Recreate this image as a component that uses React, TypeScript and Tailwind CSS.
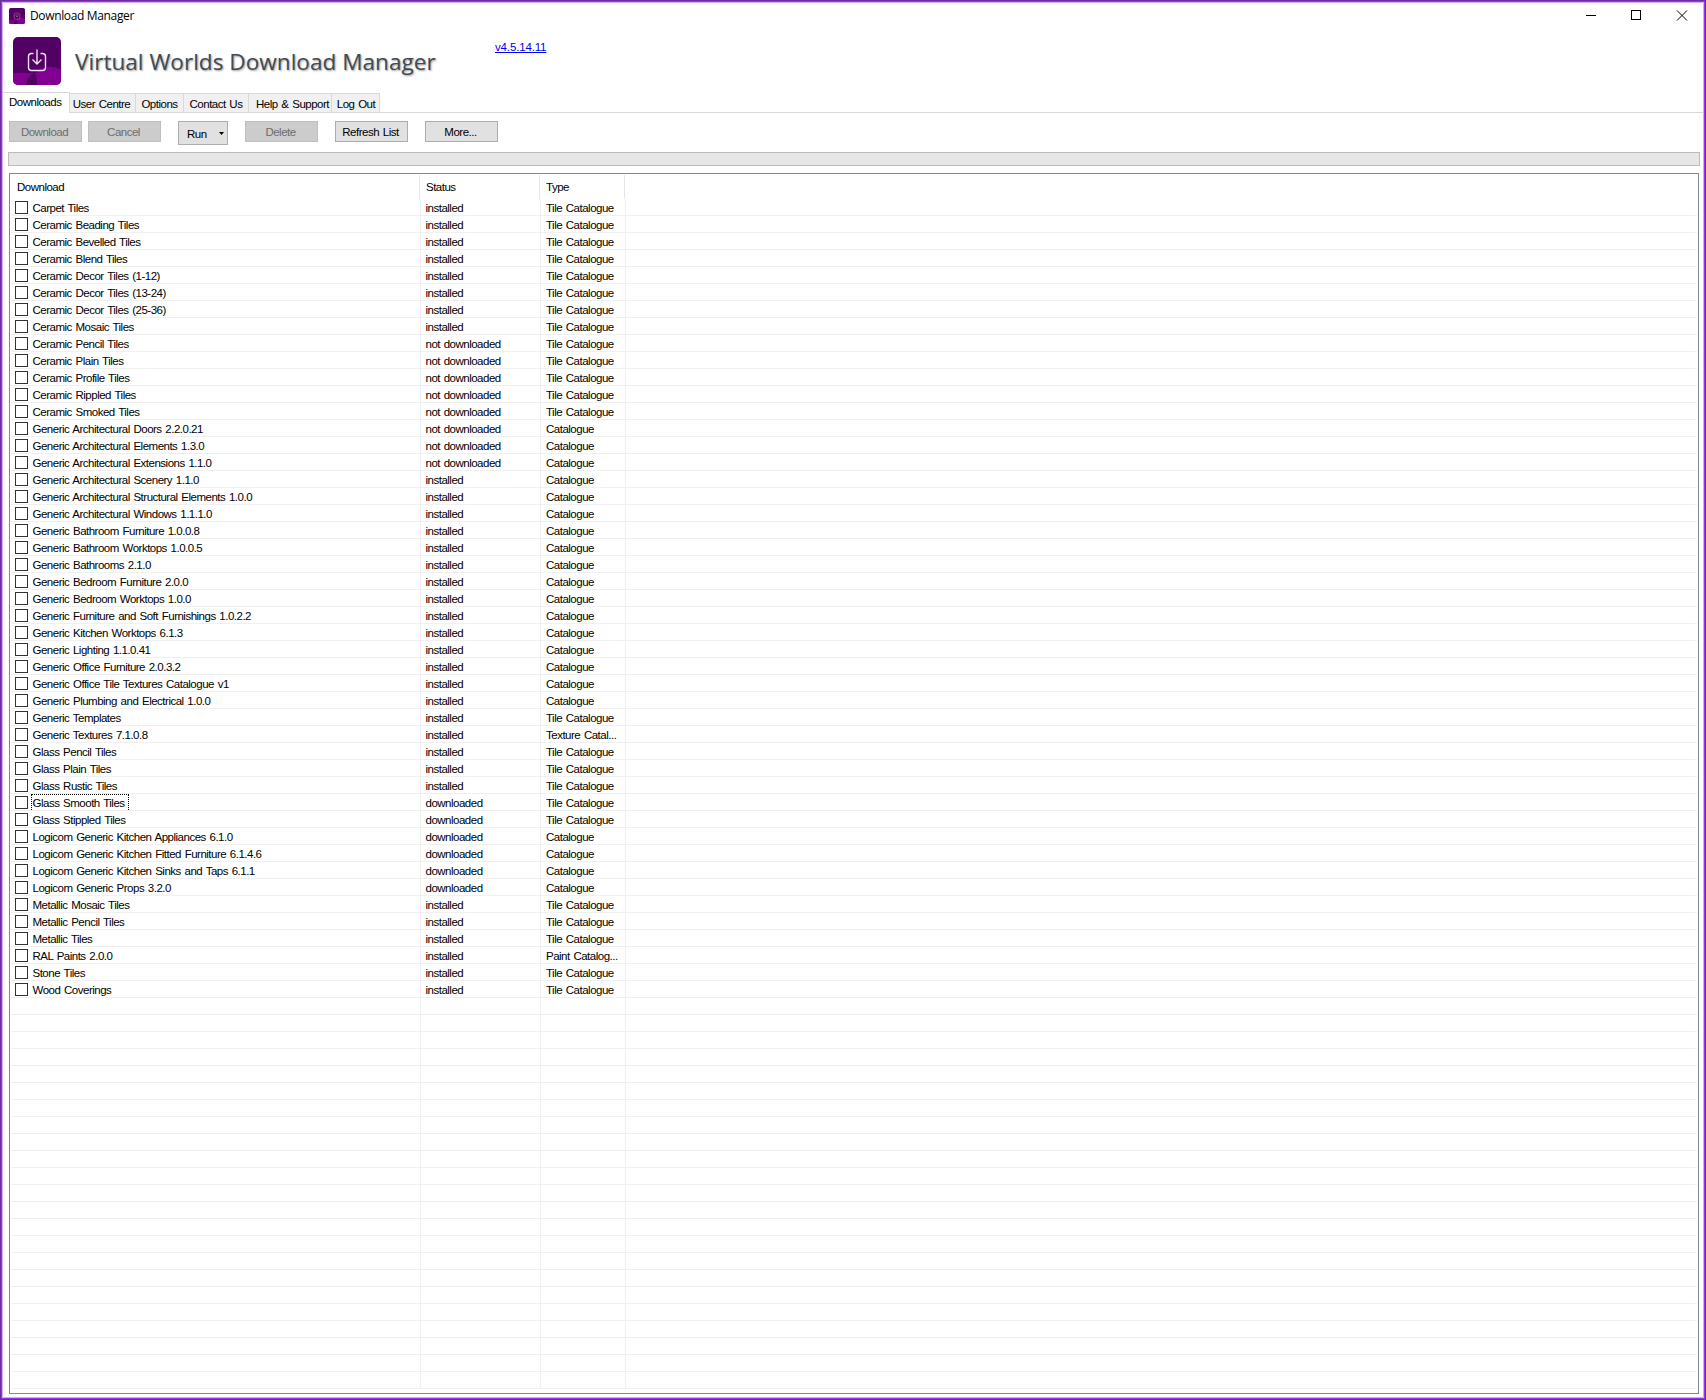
const T='Tile Catalogue', C='Catalogue', I='installed', N='not downloaded', D='downloaded';
const rows: [string, string, string][] = [
['Carpet Tiles',I,T],['Ceramic Beading Tiles',I,T],['Ceramic Bevelled Tiles',I,T],['Ceramic Blend Tiles',I,T],['Ceramic Decor Tiles (1-12)',I,T],['Ceramic Decor Tiles (13-24)',I,T],['Ceramic Decor Tiles (25-36)',I,T],['Ceramic Mosaic Tiles',I,T],
['Ceramic Pencil Tiles',N,T],['Ceramic Plain Tiles',N,T],['Ceramic Profile Tiles',N,T],['Ceramic Rippled Tiles',N,T],['Ceramic Smoked Tiles',N,T],
['Generic Architectural Doors 2.2.0.21',N,C],['Generic Architectural Elements 1.3.0',N,C],['Generic Architectural Extensions 1.1.0',N,C],
['Generic Architectural Scenery 1.1.0',I,C],['Generic Architectural Structural Elements 1.0.0',I,C],['Generic Architectural Windows 1.1.1.0',I,C],['Generic Bathroom Furniture 1.0.0.8',I,C],['Generic Bathroom Worktops 1.0.0.5',I,C],['Generic Bathrooms 2.1.0',I,C],['Generic Bedroom Furniture 2.0.0',I,C],['Generic Bedroom Worktops 1.0.0',I,C],['Generic Furniture and Soft Furnishings 1.0.2.2',I,C],['Generic Kitchen Worktops 6.1.3',I,C],['Generic Lighting 1.1.0.41',I,C],['Generic Office Furniture 2.0.3.2',I,C],['Generic Office Tile Textures Catalogue v1',I,C],['Generic Plumbing and Electrical 1.0.0',I,C],
['Generic Templates',I,T],['Generic Textures 7.1.0.8',I,'Texture Catal...'],['Glass Pencil Tiles',I,T],['Glass Plain Tiles',I,T],['Glass Rustic Tiles',I,T],['Glass Smooth Tiles',D,T],['Glass Stippled Tiles',D,T],
['Logicom Generic Kitchen Appliances 6.1.0',D,C],['Logicom Generic Kitchen Fitted Furniture 6.1.4.6',D,C],['Logicom Generic Kitchen Sinks and Taps 6.1.1',D,C],['Logicom Generic Props 3.2.0',D,C],
['Metallic Mosaic Tiles',I,T],['Metallic Pencil Tiles',I,T],['Metallic Tiles',I,T],['RAL Paints 2.0.0',I,'Paint Catalog...'],['Stone Tiles',I,T],['Wood Coverings',I,T]];
const blanks = Array.from({ length: 23 }, () => ['', '', ''] as [string, string, string]);

function Logo({ className, faint }: { className: string; faint?: boolean }) {
  return (
    <svg viewBox="0 0 48 48" className={className}>
      <clipPath id="tile"><rect width="48" height="48" rx="5" /></clipPath>
      <g clipPath="url(#tile)">
        <rect width="48" height="48" fill="#530064" />
        <path d="M0 36h23c3-4 8-6 14-6 4 0 8 1 11 3v15H0z" fill="#810092" />
        <path d="M13 48c1-7 4-11 9-12 2 3 2 8 2 12z" fill="#530064" />
      </g>
      <path d="M20.500 16.500h-2q-3 0-3 3v11q0 3 3 3h11q3 0 3-3v-11q0-3-3-3h-2M24 12.500v14M19.500 22.500l4.500 4.500 4.500-4.500" fill="none" stroke={faint ? '#b48cbe' : '#efe3f2'} strokeWidth="1.400" />
    </svg>
  );
}

const btn = 'flex h-[21px] w-[73px] items-center justify-center border pt-px pr-[2px]';
const off = 'border-[#bfbfbf] bg-[#cccccc] text-[#6d6d6d]';
const on = 'border-[#adadad] bg-[#e1e1e1]';
const tab = 'h-[19px] border-t border-r border-[#d9d9d9] bg-[#f0f0f0] pt-[2px] text-center';

export default function App() {
  return (
    <div className="flex h-[1400px] w-[1706px] flex-col overflow-hidden border border-[#6a2c9c] bg-white font-['Liberation_Sans',sans-serif] text-[11.5px] leading-[16px] tracking-[-0.5px] [word-spacing:1px] whitespace-pre text-black">
      <div className="flex min-h-0 flex-1 flex-col border border-[#9a35e8]">
        <div className="flex min-h-0 flex-1 flex-col border border-[#d9a6ff]">
          <div className="flex h-[25px] items-center pl-[6px]">
            <Logo className="size-4" faint />
            <span className="ml-[5px] font-['Open_Sans'] text-[12px] tracking-[-0.35px] [word-spacing:0px]">Download Manager</span>
            <svg className="ml-auto mr-[14px] h-[11px] w-[103px]" viewBox="0 0 103 11" fill="none" stroke="#000" shapeRendering="crispEdges">
              <path d="M0 5.500h10M45.500.500h9v9h-9z" />
              <path d="M91 .500l10 10M101 .500l-10 10" shapeRendering="auto" />
            </svg>
          </div>
          <div className="flex h-[64px] pl-[10px] pt-[9px]">
            <Logo className="size-12" />
            <h1 className="ml-[14px] mt-[8px] w-[420px] font-['Open_Sans'] text-[22.6px] leading-[34px] tracking-normal [word-spacing:0px] text-[#414b54] [text-shadow:1px_1px_2px_#00000066]">Virtual Worlds Download Manager</h1>
            <a className="mt-[2px] h-4 tracking-[-0.15px] text-[#0000ee] underline">v4.5.14.11</a>
          </div>
          <div className="flex h-[21px] items-end border-b border-[#d9d9d9]">
            <div className="z-10 -mb-px h-[21px] w-[67px] border-t border-r border-[#d9d9d9] bg-white pl-[6px] pt-px">Downloads</div>
            <div className={`${tab} w-[66px] pr-[2px]`}>User Centre</div>
            <div className={`${tab} w-[48px]`}>Options</div>
            <div className={`${tab} w-[65px]`}>Contact Us</div>
            <div className={`${tab} w-[83px] pl-[5px]`}>Help &amp; Support</div>
            <div className={`${tab} w-[48px] pl-px`}>Log Out</div>
          </div>
          <div className="flex h-[39px] pl-[6px] pt-[8px]">
            <div className={`${btn} ${off}`}>Download</div>
            <div className={`${btn} ${off} ml-[6px]`}>Cancel</div>
            <div className={`${on} ml-[17px] flex h-[24px] w-[50px] items-center border pl-2 pt-px`}>
              Run
              <svg className="ml-auto mr-[3px] h-[3px] w-[5px]" viewBox="0 0 5 3"><path d="M0 0h5L2.500 3z" /></svg>
            </div>
            <div className={`${btn} ${off} ml-[17px]`}>Delete</div>
            <div className={`${btn} ${on} ml-[17px]`}>Refresh List</div>
            <div className={`${btn} ${on} ml-[17px]`}>More...</div>
          </div>
          <div className="ml-[5px] h-[14px] w-[1692px] border border-[#bcbcbc] bg-[#e6e6e6]" />
          <div className="ml-[6px] mt-[7px] h-[1221px] w-[1690px] overflow-hidden border border-[#828790] px-px pt-px">
            <div className="flex h-[24px]">
              <div className="w-[409px] border-r border-[#e5e5e5] pl-[6px] pt-[4px]">Download</div>
              <div className="w-[120px] border-r border-[#e5e5e5] pl-[6px] pt-[4px]">Status</div>
              <div className="w-[85px] border-r border-[#e5e5e5] pl-[6px] pt-[4px]">Type</div>
            </div>
            {[...rows, ...blanks].map(([a, b, c], i) => (
              <div key={i} className="flex h-[17px] w-[1686px] border-b border-[#f0f0f0] leading-[18px]">
                <div className="flex w-[410px] border-r border-[#f0f0f0] pl-1">
                  {a && <div className="mt-[2px] mr-[3px] size-[13px] border border-[#333]" />}
                  {a === 'Glass Smooth Tiles'
                    ? <div className="h-[16px] w-[98px] border border-b-0 border-dotted border-black pl-[0.5px] leading-[16px]">{a}</div>
                    : <div className="pl-[1.5px]">{a}</div>}
                </div>
                <div className="w-[120px] border-r border-[#f0f0f0] pl-[4.5px]">{b}</div>
                <div className="w-[85px] border-r border-[#f0f0f0] pl-[5px]">{c}</div>
              </div>
            ))}
          </div>
        </div>
      </div>
    </div>
  );
}
